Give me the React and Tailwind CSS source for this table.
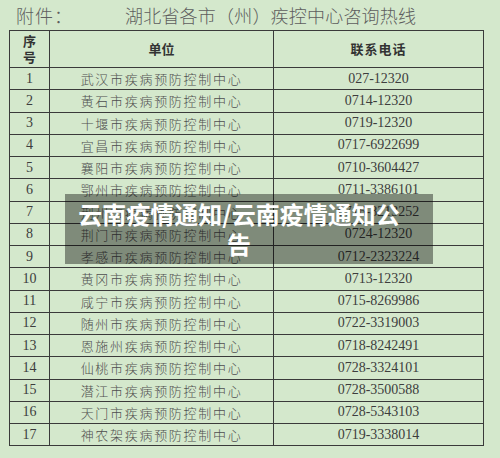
import React from 'react';

const rows = [
  ['1', '武汉市疾病预防控制中心', '027-12320'],
  ['2', '黄石市疾病预防控制中心', '0714-12320'],
  ['3', '十堰市疾病预防控制中心', '0719-12320'],
  ['4', '宜昌市疾病预防控制中心', '0717-6922699'],
  ['5', '襄阳市疾病预防控制中心', '0710-3604427'],
  ['6', '鄂州市疾病预防控制中心', '0711-3386101'],
  ['7', '荆州市疾病预防控制中心', '0716-8213252'],
  ['8', '荆门市疾病预防控制中心', '0724-12320'],
  ['9', '孝感市疾病预防控制中心', '0712-2323224'],
  ['10', '黄冈市疾病预防控制中心', '0713-12320'],
  ['11', '咸宁市疾病预防控制中心', '0715-8269986'],
  ['12', '随州市疾病预防控制中心', '0722-3319003'],
  ['13', '恩施州疾病预防控制中心', '0718-8242491'],
  ['14', '仙桃市疾病预防控制中心', '0728-3324101'],
  ['15', '潜江市疾病预防控制中心', '0728-3500588'],
  ['16', '天门市疾病预防控制中心', '0728-5343103'],
  ['17', '神农架疾病预防控制中心', '0719-3338014'],
];

const App = () => {
  return (
    <div className="relative w-[500px] h-[458px] overflow-hidden bg-[#d4e8cc] font-['Noto_Sans_CJK_SC',sans-serif]">
      {/* heading */}
      <div className="h-[30px] flex items-center text-[18px] text-[#5e5e5e] font-light">
        <span className="ml-[16px] tracking-[1px]">附件：</span>
        <span className="ml-[52px] tracking-[0.2px]">湖北省各市（州）疾控中心咨询热线</span>
      </div>

      {/* table */}
      <table className="ml-[9px] w-[475px] border-collapse border-[1.5px] border-[#2f2f2f]">
        <thead>
          <tr className="h-[37px] text-[13px] font-bold text-[#333]">
            <th className="w-[40px] border border-[#3a3a3a] leading-[16px]">
              序<br />号
            </th>
            <th className="w-[224px] border border-[#3a3a3a]">单位</th>
            <th className="border border-[#3a3a3a] tracking-[1px]">联系电话</th>
          </tr>
        </thead>
        <tbody>
          {rows.map(([no, name, tel]) => (
            <tr key={no} className="h-[22.25px] leading-none">
              <td className="border border-[#3a3a3a] p-0 text-center text-[14px] text-[#3d3d3d] font-['Liberation_Serif',serif]">
                {no}
              </td>
              <td className="border border-[#3a3a3a] p-0 text-center text-[13px] tracking-[1.7px] text-[#4f4f4f] font-light">
                {name}
              </td>
              <td className="border border-[#3a3a3a] p-0 text-center text-[14px] text-[#3d3d3d] font-['Liberation_Serif',serif]">
                {tel}
              </td>
            </tr>
          ))}
        </tbody>
      </table>

      {/* caption overlay */}
      <div className="absolute left-[65px] top-[194px] w-[368px] h-[70px] bg-black/40 flex items-center pl-[12px]">
        <div className="w-[324px] text-center text-white text-[24px] leading-[30px] font-bold">
          云南疫情通知/云南疫情通知公告
        </div>
      </div>
    </div>
  );
};

export default App;
